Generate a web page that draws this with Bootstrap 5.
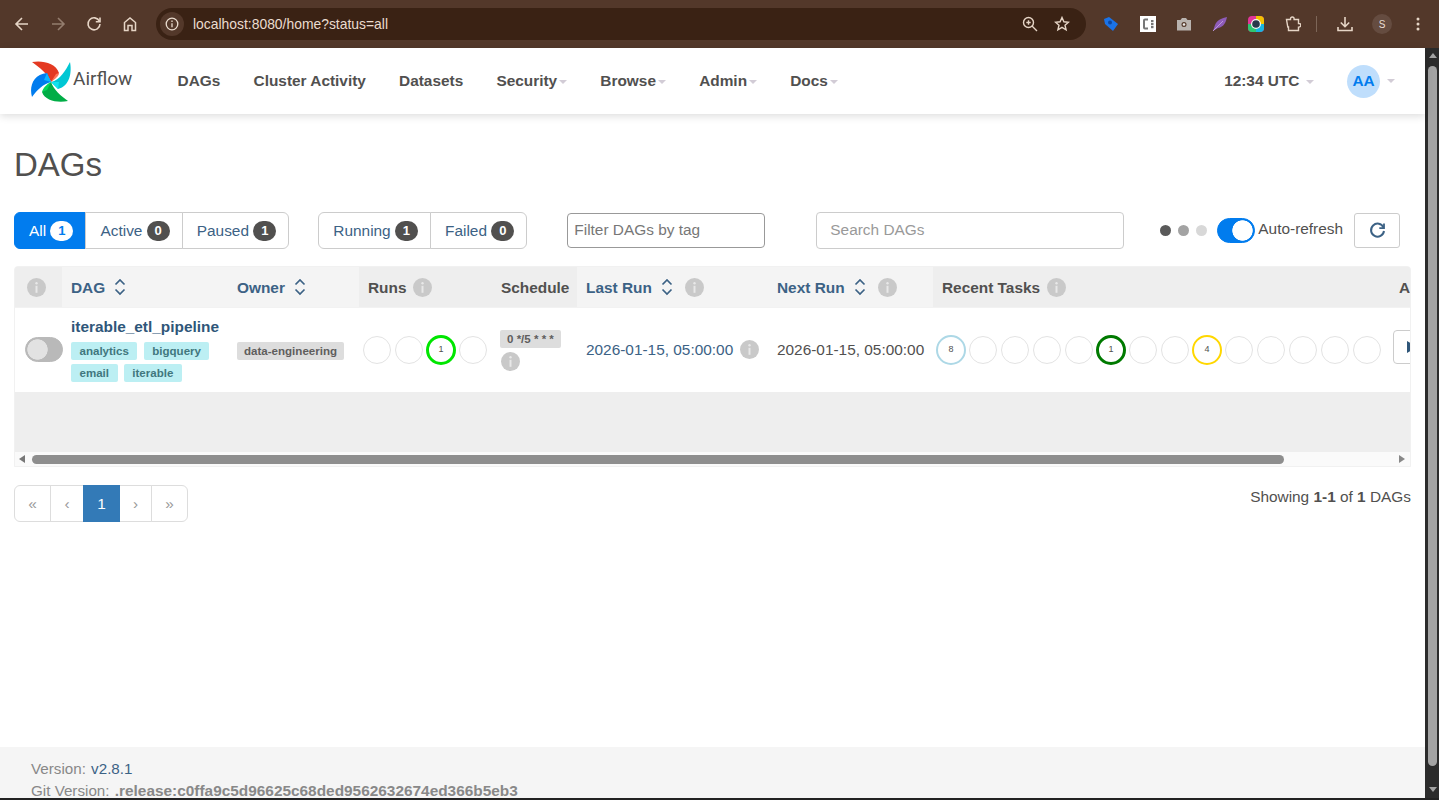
<!DOCTYPE html>
<html lang="en">
<head>
<meta charset="UTF-8">
<meta name="viewport" content="width=device-width, initial-scale=1.0">
<title>DAGs - Airflow</title>
<link href="https://cdn.jsdelivr.net/npm/bootstrap@5.3.0/dist/css/bootstrap.min.css" rel="stylesheet">
<style>
html, body { height: 800px; overflow: hidden; }
body { font-family: "Liberation Sans", Arial, sans-serif; font-size: 15.4px; color: #51504f; background: #fff; }

/* browser frame */
.chrome-bar { height: 48px; background: #53382a; padding: 0 14px 0 4px; }
.chrome-btn { width: 36px; height: 36px; flex: none; }
.omnibox { width: 930px; height: 32px; margin-left: 8px; background: #3a2214; border-radius: 16px; padding: 0 6px 0 4px; color: #eadccf; font-size: 13.9px; }
.omni-info { width: 24px; height: 24px; background: #53382a; border-radius: 50%; margin-right: 9px; }
.omni-end { gap: 16px; margin-right: 10px; }
.ext-row { margin-left: 17px; }
.ext-c { margin-left: 21px; }
.ext-cam, .ext-feather, .ext-ring, .ext-dl { margin-left: 20px; }
.ext-puzzle { margin-left: 21px; }
.ext-kebab { margin-left: 24px; }
.chrome-profile { width: 20px; height: 20px; background: #654c40; color: #e8dcd3; font-size: 10px; border-radius: 50%; margin-left: 19px; }
.chrome-sep { width: 1px; height: 16px; background: #7d6658; margin-left: 15px; }

.app-frame { height: 752px; }
.app-page { width: 1425px; flex: none; }
.v-scroll { width: 14px; flex: none; background: #2b2b2b; padding: 5px 2px 0 3px; }
.v-thumb { height: 700px; background: #a3a3a3; border-radius: 5px; }
.v-arrow-up, .v-arrow-down { width: 0; height: 0; border-left: 4.5px solid transparent; border-right: 4.5px solid transparent; }
.v-arrow-up { border-bottom: 5px solid #a3a3a3; margin-bottom: 8px; }
.v-arrow-down { border-top: 5px solid #a3a3a3; margin-top: 21px; }

/* navbar */
.app-nav { --bs-navbar-nav-link-padding-x: 16.6px; height: 66px; padding: 0 0 0 31px; background: #fff; box-shadow: 0 2px 8px rgba(0,0,0,.14); z-index: 2; flex: none; }
.brand-box { color: #51504f; font-family: Roboto, "Liberation Sans", sans-serif; font-size: 19px; width: 130px; text-decoration: none; margin-right: 0; padding: 0; }
.brand-box span { margin: 0 0 4px 1px; }
.app-nav .nav-link { color: #51504f; font-weight: 700; font-size: 15.4px; padding-top: 0; padding-bottom: 0; }
.app-nav .dropdown-toggle::after { border-top: 4px solid #d2ccd6; border-left: 4px solid transparent; border-right: 4px solid transparent; border-bottom: 0; margin-left: 2px; vertical-align: 2px; }
.clock-link { margin-right: 16px; }
.app-nav .clock-link .dropdown-toggle::after { margin-left: 7px; }
.avatar-dot { width: 33px; height: 33px; background: #bfdefc; color: #017cee; font-weight: 700; font-size: 15.4px; border-radius: 50%; margin-right: 1px; }
.app-nav .nav-link.user-menu { padding: 0 30px 0 0; }
.app-nav .user-menu::after { margin-left: 6px; }

/* page body */
.page-body { padding: 0 14px; flex: 1 1 auto; min-height: 0; }
.page-title { font-size: 33px; font-weight: 400; margin: 33px 0 28px; line-height: 36px; color: #51504f; }
.toolbar { height: 38px; margin-bottom: 17px; }
.status-group .btn { font-size: 15.4px; color: #3c6285; border-color: #ccc; background: #fff; padding: 0 12.1px 0 14px; height: 37px; line-height: 35px; }
.status-group .btn.picked { background: #017cee; border-color: #017cee; color: #fff; }
.second-group { margin-left: 29px; }
.status-count { background: #51504f; color: #fff; font-size: 13px; font-weight: 700; border-radius: 11px; width: 23px; text-align: center; display: inline-block; line-height: 20px; height: 20px; vertical-align: 1px; }
.picked .status-count { background: #fff; color: #017cee; }
.tag-filter { width: 198px; height: 35px; margin-left: 40px; border: 1px solid #999; border-radius: 4px; padding: 0 6px; font-size: 15.4px; flex: none; }
.dag-search { width: 308px; height: 37px; margin-left: 51px; border-color: #ccc; border-radius: 4px; padding: 0 13px; font-size: 15.4px; flex: none; }
.tag-filter::placeholder { color: #777; opacity: 1; }
.dag-search::placeholder { color: #999; opacity: 1; }
.load-dot { width: 11px; height: 11px; border-radius: 50%; flex: none; }
.dot-dark { background: #5a5a5a; }
.dot-mid { background: #a3a3a3; }
.dot-pale { background: #d8d8d8; }
.dots-box { margin-left: 36px; gap: 7px; }
.refresh-switch { margin: 0 0 0 10px; padding: 0; min-height: 0; }
.form-switch .form-check-input.switch-skin { width: 38px; height: 25px; flex: none; margin: 0; float: none; display: block; border-radius: 13px; background-size: 21px 21px; background-repeat: no-repeat; background-position: 1px center; background-image: radial-gradient(circle closest-side, #e2e2e2 94%, transparent 100%); background-color: #b9b9b9; border-color: #b9b9b9; box-shadow: none; }
.form-switch .form-check-input.switch-skin:checked { background-position: right 1px center; background-image: radial-gradient(circle closest-side, #fff 94%, transparent 100%); background-color: #017cee; border-color: #017cee; }
.refresh-label { font-size: 15.4px; margin-left: 3px; padding-bottom: 3px; }
.refresh-btn { width: 46px; height: 35px; margin-left: 11px; border-color: #ccc; border-radius: 3px; padding: 0; flex: none; }

/* table */
.table-box { width: 1397px; border: 1px solid #f1f1f1; border-radius: 4px 4px 0 0; overflow: hidden; background: #eee; }
.dag-grid { table-layout: fixed; width: 1500px; margin: 0; border-collapse: collapse; font-size: 15.4px; }
.c-toggle { width: 47px; } .c-dag { width: 167px; } .c-owner { width: 130px; } .c-runs { width: 134px; } .c-sched { width: 84px; }
.c-last { width: 192px; } .c-next { width: 164px; } .c-tasks { width: 458px; } .c-act { width: 124px; }
.dag-grid th { height: 40px; background: #eee; color: #51504f; font-weight: 700; padding: 1px 8px 0; white-space: nowrap; border: 0; border-bottom: 1px solid #f2f2f2; vertical-align: middle; }
.dag-grid th.sortable { background: #f4f4f4; color: #3c6285; }
.dag-grid td { height: 85px; background: #fff; color: #51504f; padding: 0 8px; border: 0; vertical-align: middle; white-space: nowrap; box-shadow: none; }
.dag-grid th.pad-nine, .dag-grid td.pad-nine { padding-left: 9px; }
.dag-grid th.first-cell { padding-left: 12px; }
.dag-grid td.first-cell { padding: 0 0 0 10px; }
.dag-grid td.ring-cell { padding: 0 4px; }
.dag-grid td.action-cell { padding-left: 2px; }
.dag-name { color: #2f5679; font-weight: 700; text-decoration: none; display: block; margin-bottom: 2px; }
.blue-text { color: #3c6285; text-decoration: none; }
.tag-pill { display: inline-block; font-size: 11.55px; font-weight: 700; line-height: 18px; height: 18px; padding: 0 8.5px; border-radius: 2px; background: #bceff3; color: #41777e; margin: 2px 2px 2px 0; }
.grey-pill { background: #ddd; color: #5f5e5d; padding: 0 7px; }
.cron-pill { margin-left: -1px; }
.pill-box { width: 145px; white-space: normal; line-height: 0; }
.info-mark { width: 19px; height: 19px; vertical-align: -4px; margin-left: 7px; }
.info-wide { margin-left: 12px; }
.sort-mark { width: 12px; height: 18px; vertical-align: -3px; margin-left: 9px; }
.state-ring { width: 28px; height: 28px; border: 1.5px solid #e3e3e3; border-radius: 50%; font-size: 9px; font-weight: 400; color: #51504f; flex: none; background: #fff; line-height: 1; }
.ring-row { gap: 4px; }
.ring-lime { border: 3px solid #00e600; width: 30px; height: 30px; margin: 0 -1px; }
.ring-green { border: 3px solid #007a00; width: 30px; height: 30px; margin: 0 -1px; }
.ring-sky { border: 2.5px solid #add8e6; width: 30px; height: 30px; margin: 0 -1px; }
.ring-gold { border: 2.5px solid #ffd700; width: 30px; height: 30px; margin: 0 -1px; }
.action-box { width: 40px; height: 34px; border: 1px solid #ccc; border-radius: 4px; padding: 0 0 0 12px; background: #fff; }
.empty-band { height: 60px; background: #eee; }
.h-scroll { height: 14px; background: #fafafa; padding: 0 4px; }
.h-thumb { width: 1252px; height: 9px; background: #8e8e8e; border-radius: 5px; margin-left: 7px; }
.h-arrow-l, .h-arrow-r { width: 0; height: 0; border-top: 4px solid transparent; border-bottom: 4px solid transparent; flex: none; }
.h-arrow-l { border-right: 6px solid #777; }
.h-arrow-r { border-left: 6px solid #888; margin-left: auto; margin-right: 1px; }

.pager-row { width: 1397px; margin-top: 18px; }
.pager-row .pagination { margin: 0; --bs-pagination-border-color: #ddd; }
.pager-row .page-link { height: 37px; line-height: 35px; padding: 0; text-align: center; color: #999; font-size: 15.4px; border-color: #ddd; }
.pw-wide { width: 37px; } .pw-thin { width: 34px; } .pw-next { width: 33px; }
.pager-row .active .page-link { background: #337ab7; border-color: #337ab7; color: #fff; }

.app-footer { height: 53px; background: #f5f5f5; padding: 11px 31px 0; color: #888; font-size: 15.2px; line-height: 22px; flex: none; overflow: hidden; }
.app-footer a { color: #3c6285; text-decoration: none; margin-left: 1px; }
.app-footer b { color: #888; font-size: 15.4px; margin-left: 1px; }
.bottom-line { height: 2px; background: #222; position: absolute; left: 0; right: 0; bottom: 0; z-index: 5; }
</style>
</head>
<body class="position-relative">

<svg width="0" height="0" class="position-absolute">
  <symbol id="i-info" viewBox="0 0 19 19"><circle cx="9.5" cy="9.5" r="9.5" fill="#c9c9c9"/><circle cx="9.5" cy="5.2" r="1.2" fill="#e8e8e8"/><rect x="8.5" y="7.8" width="2" height="7" fill="#e8e8e8"/></symbol>
  <symbol id="i-sort" viewBox="0 0 12 18"><path d="M1.5 6.5 6 2l4.5 4.5M1.5 11.5 6 16l4.5-4.5" fill="none" stroke="#3c6285" stroke-width="1.7"/></symbol>
</svg>

<div class="chrome-bar d-flex align-items-center">
  <div class="chrome-btn d-flex align-items-center justify-content-center"><svg width="16" height="16" viewBox="0 0 16 16" fill="none" stroke="#e6d5c6" stroke-width="1.6"><path d="M14 8H2.5M8 2 2 8l6 6"/></svg></div>
  <div class="chrome-btn d-flex align-items-center justify-content-center"><svg width="16" height="16" viewBox="0 0 16 16" fill="none" stroke="#947d6e" stroke-width="1.6"><path d="M2 8h11.500M8 2l6 6-6 6"/></svg></div>
  <div class="chrome-btn d-flex align-items-center justify-content-center"><svg width="16" height="16" viewBox="0 0 16 16" fill="none" stroke="#e6d5c6" stroke-width="1.6"><path d="M13.400 5.200A6 6 0 1 0 14 8"/><path d="M14 1.500v4.200H9.800"/></svg></div>
  <div class="chrome-btn d-flex align-items-center justify-content-center"><svg width="16" height="16" viewBox="0 0 16 16" fill="none" stroke="#e6d5c6" stroke-width="1.5"><path d="M2.500 14.500V6.500L8 2l5.500 4.500v8H10V9.500H6v5z"/></svg></div>
  <div class="omnibox d-flex align-items-center">
    <div class="omni-info d-flex align-items-center justify-content-center"><svg width="14" height="14" viewBox="0 0 14 14" fill="none" stroke="#eadccf" stroke-width="1.3"><circle cx="7" cy="7" r="5.800"/><path d="M7 6.200v4M7 3.600v1.300"/></svg></div>
    <span>localhost:8080/home?status=all</span>
    <div class="ms-auto d-flex align-items-center omni-end">
      <svg width="16" height="16" viewBox="0 0 16 16" fill="none" stroke="#e6d5c6" stroke-width="1.4"><circle cx="6.500" cy="6.500" r="5"/><path d="m10 10 5 5M4.300 6.500h4.400M6.500 4.300v4.400"/></svg>
      <svg width="16" height="16" viewBox="0 0 16 16" fill="none" stroke="#e6d5c6" stroke-width="1.4"><path d="m8 1.500 1.900 4.300 4.600.4-3.500 3 1.100 4.600L8 11.400l-4.100 2.400L5 9.200l-3.500-3 4.600-.4z"/></svg>
    </div>
  </div>
  <div class="d-flex align-items-center flex-grow-1 ext-row">
    <svg width="16" height="16" viewBox="0 0 16 16"><path d="M1 3 6 1l9 7-5 7-8-7z" fill="#1a73e8"/><circle cx="7" cy="6.500" r="2" fill="#0d47a1"/></svg>
    <svg class="ext-c" width="16" height="16" viewBox="0 0 16 16"><rect width="16" height="16" fill="#fff"/><path d="M8 3.500H5a1 1 0 0 0-1 1v7a1 1 0 0 0 1 1h3" fill="none" stroke="#777" stroke-width="2"/><rect x="11" y="4" width="2.500" height="2.200" fill="#777"/><rect x="11" y="7" width="2.500" height="2.200" fill="#777"/><rect x="11" y="10" width="2.500" height="2.200" fill="#777"/></svg>
    <svg class="ext-cam" width="16" height="14" viewBox="0 0 16 14"><path d="M1 3h3.500L6 1h4l1.500 2H15v10.500H1z" fill="#b9b3af"/><circle cx="8" cy="7.500" r="2.500" fill="#53382a"/><circle cx="8" cy="7.500" r="1.300" fill="#eee"/></svg>
    <svg class="ext-feather" width="16" height="16" viewBox="0 0 16 16"><path d="M1 15 3 9c2-5 7-7 12-8-1 5-3 10-9 11z" fill="#8e5cb8"/><path d="M1 15 11 5" stroke="#c9a6e4" stroke-width=".8"/></svg>
    <svg class="ext-ring" width="16" height="16" viewBox="0 0 16 16"><rect width="16" height="16" rx="4" fill="#e0359a"/><path d="M8 0h4a4 4 0 0 1 4 4v4H8z" fill="#f2c200"/><path d="M8 8h8v4a4 4 0 0 1-4 4H8z" fill="#17b6e0"/><path d="M0 8h8v8H4a4 4 0 0 1-4-4z" fill="#2dc770"/><circle cx="8" cy="8" r="5" fill="#f4f4f4"/><circle cx="8" cy="8" r="3.800" fill="#28384a"/></svg>
    <svg class="ext-puzzle" width="16" height="16" viewBox="0 0 16 16" fill="none" stroke="#e6d5c6" stroke-width="1.4"><path d="M1.500 3.500h4V2.800a1.800 1.800 0 0 1 3.600 0v.7h4.400v4h.5a1.800 1.800 0 0 1 0 3.600h-.5v3.400H3.500V11H2.800z"/></svg>
    <span class="chrome-sep"></span>
    <svg class="ext-dl" width="16" height="16" viewBox="0 0 16 16" fill="none" stroke="#e6d5c6" stroke-width="1.6"><path d="M8 1v9.500M3.800 6.500 8 10.700l4.200-4.200M1 11v3.500h14V11"/></svg>
    <span class="chrome-profile d-flex align-items-center justify-content-center">S</span>
    <svg class="ext-kebab" width="4" height="14" viewBox="0 0 4 14" fill="#e6d5c6"><circle cx="2" cy="2" r="1.500"/><circle cx="2" cy="7" r="1.500"/><circle cx="2" cy="12" r="1.500"/></svg>
  </div>
</div>

<div class="app-frame d-flex">
  <div class="app-page d-flex flex-column">
    <nav class="navbar navbar-expand app-nav">
      <a class="navbar-brand brand-box d-flex align-items-center" href="#">
        <svg width="41" height="41" viewBox="31 58 41 41">
          <path d="M32 59C42 57 56 60 59 70L51 79C48 71 40 65 32 59Z" fill="#e43921"/>
          <path d="M59 70C59 73 55 76 51 79L56 71Z" fill="#ff7557"/>
          <path d="M70 59C72 69 70 83 58 86L51 79C60 77 66 67 70 59Z" fill="#00c7d4"/>
          <path d="M58 86C56 84 53 81 51 79L59 79Z" fill="#11e1ee"/>
          <path d="M68 98C58 100 45 98 42 89L51 79C54 87 61 93 68 98Z" fill="#00ad46"/>
          <path d="M42 89C43 85 47 81 51 79L47 87Z" fill="#04d659"/>
          <path d="M32 94C29 84 33 71 47 70L51 79C43 81 37 87 32 94Z" fill="#017cee"/>
          <path d="M47 70C48 73 50 76 51 79L44 77Z" fill="#0cb6ff"/>
        </svg>
        <span>Airflow</span>
      </a>
      <ul class="navbar-nav">
        <li class="nav-item"><a class="nav-link" href="#">DAGs</a></li>
        <li class="nav-item"><a class="nav-link" href="#">Cluster Activity</a></li>
        <li class="nav-item"><a class="nav-link" href="#">Datasets</a></li>
        <li class="nav-item"><a class="nav-link dropdown-toggle" href="#">Security</a></li>
        <li class="nav-item"><a class="nav-link dropdown-toggle" href="#">Browse</a></li>
        <li class="nav-item"><a class="nav-link dropdown-toggle" href="#">Admin</a></li>
        <li class="nav-item"><a class="nav-link dropdown-toggle" href="#">Docs</a></li>
      </ul>
      <ul class="navbar-nav ms-auto align-items-center">
        <li class="nav-item clock-link"><a class="nav-link dropdown-toggle" href="#">12:34 UTC</a></li>
        <li class="nav-item"><a class="nav-link dropdown-toggle user-menu d-flex align-items-center" href="#"><span class="avatar-dot d-flex align-items-center justify-content-center">AA</span></a></li>
      </ul>
    </nav>

    <main class="page-body">
      <h1 class="page-title">DAGs</h1>
      <div class="toolbar d-flex align-items-center">
        <div class="btn-group status-group">
          <a href="#" class="btn picked">All <span class="status-count">1</span></a>
          <a href="#" class="btn">Active <span class="status-count">0</span></a>
          <a href="#" class="btn">Paused <span class="status-count">1</span></a>
        </div>
        <div class="btn-group status-group second-group">
          <a href="#" class="btn">Running <span class="status-count">1</span></a>
          <a href="#" class="btn">Failed <span class="status-count">0</span></a>
        </div>
        <input class="tag-filter" type="text" placeholder="Filter DAGs by tag">
        <input class="form-control dag-search" type="text" placeholder="Search DAGs">
        <div class="d-flex align-items-center dots-box">
          <span class="load-dot dot-dark"></span>
          <span class="load-dot dot-mid"></span>
          <span class="load-dot dot-pale"></span>
        </div>
        <div class="form-check form-switch refresh-switch"><input class="form-check-input switch-skin" type="checkbox" checked></div>
        <span class="refresh-label">Auto-refresh</span>
        <button class="btn refresh-btn d-flex align-items-center justify-content-center" type="button">
          <svg width="17" height="17" viewBox="0 0 17 17" fill="none" stroke="#3c6285" stroke-width="2"><path d="M14.500 5.500A6.500 6.500 0 1 0 15 9"/><path d="M15 1.500v4.700h-4.700" stroke-width="1.8"/></svg>
        </button>
      </div>

      <div class="table-box">
        <table class="table dag-grid">
          <colgroup>
            <col class="c-toggle"><col class="c-dag"><col class="c-owner"><col class="c-runs"><col class="c-sched"><col class="c-last"><col class="c-next"><col class="c-tasks"><col class="c-act">
          </colgroup>
          <thead>
            <tr>
              <th class="first-cell"><svg class="info-mark m-0"><use href="#i-info"/></svg></th>
              <th class="sortable pad-nine">DAG<svg class="sort-mark"><use href="#i-sort"/></svg></th>
              <th class="sortable">Owner<svg class="sort-mark"><use href="#i-sort"/></svg></th>
              <th class="pad-nine">Runs<svg class="info-mark"><use href="#i-info"/></svg></th>
              <th>Schedule</th>
              <th class="sortable pad-nine">Last Run<svg class="sort-mark"><use href="#i-sort"/></svg><svg class="info-mark info-wide"><use href="#i-info"/></svg></th>
              <th class="sortable">Next Run<svg class="sort-mark"><use href="#i-sort"/></svg><svg class="info-mark info-wide"><use href="#i-info"/></svg></th>
              <th class="pad-nine">Recent Tasks<svg class="info-mark"><use href="#i-info"/></svg></th>
              <th>Actions</th>
            </tr>
          </thead>
          <tbody>
            <tr>
              <td class="first-cell"><div class="form-check form-switch m-0 p-0 d-flex"><input class="form-check-input switch-skin" type="checkbox"></div></td>
              <td class="pad-nine">
                <a class="dag-name" href="#">iterable_etl_pipeline</a>
                <div class="pill-box"><span class="tag-pill">analytics</span> <span class="tag-pill">bigquery</span> <span class="tag-pill">email</span> <span class="tag-pill">iterable</span></div>
              </td>
              <td><span class="tag-pill grey-pill">data-engineering</span></td>
              <td class="ring-cell">
                <div class="d-flex ring-row align-items-center">
                  <span class="state-ring"></span><span class="state-ring"></span>
                  <span class="state-ring ring-lime d-flex align-items-center justify-content-center">1</span>
                  <span class="state-ring"></span>
                </div>
              </td>
              <td><span class="tag-pill grey-pill cron-pill">0 */5 * * *</span><br><svg class="info-mark m-0"><use href="#i-info"/></svg></td>
              <td class="pad-nine"><a class="blue-text" href="#">2026-01-15, 05:00:00</a><svg class="info-mark"><use href="#i-info"/></svg></td>
              <td>2026-01-15, 05:00:00</td>
              <td class="ring-cell">
                <div class="d-flex ring-row align-items-center">
                  <span class="state-ring ring-sky d-flex align-items-center justify-content-center">8</span>
                  <span class="state-ring"></span><span class="state-ring"></span><span class="state-ring"></span><span class="state-ring"></span>
                  <span class="state-ring ring-green d-flex align-items-center justify-content-center">1</span>
                  <span class="state-ring"></span><span class="state-ring"></span>
                  <span class="state-ring ring-gold d-flex align-items-center justify-content-center">4</span>
                  <span class="state-ring"></span><span class="state-ring"></span><span class="state-ring"></span><span class="state-ring"></span><span class="state-ring"></span>
                </div>
              </td>
              <td class="action-cell"><button class="action-box" type="button"><svg width="12" height="14" viewBox="0 0 12 14" class="d-block"><path d="M1 1v12l10-6z" fill="#2f5679"/></svg></button></td>
            </tr>
          </tbody>
        </table>
        <div class="empty-band"></div>
        <div class="h-scroll d-flex align-items-center">
          <span class="h-arrow-l"></span>
          <span class="h-thumb"></span>
          <span class="h-arrow-r"></span>
        </div>
      </div>

      <div class="pager-row d-flex justify-content-between align-items-start">
        <ul class="pagination">
          <li class="page-item"><a class="page-link pw-wide" href="#">«</a></li>
          <li class="page-item"><a class="page-link pw-thin" href="#">‹</a></li>
          <li class="page-item active"><a class="page-link pw-wide" href="#">1</a></li>
          <li class="page-item"><a class="page-link pw-next" href="#">›</a></li>
          <li class="page-item"><a class="page-link pw-wide" href="#">»</a></li>
        </ul>
        <div>Showing <b>1-1</b> of <b>1</b> DAGs</div>
      </div>
    </main>

    <footer class="app-footer">
      <div>Version: <a href="#">v2.8.1</a></div>
      <div>Git Version: <b>.release:c0ffa9c5d96625c68ded9562632674ed366b5eb3</b></div>
    </footer>
  </div>
  <div class="v-scroll d-flex flex-column align-items-center">
    <span class="v-arrow-up"></span>
    <div class="v-thumb w-100"></div>
    <span class="v-arrow-down"></span>
  </div>
</div>
<div class="bottom-line"></div>

<script src="https://cdn.jsdelivr.net/npm/bootstrap@5.3.0/dist/js/bootstrap.bundle.min.js"></script>
</body>
</html>
